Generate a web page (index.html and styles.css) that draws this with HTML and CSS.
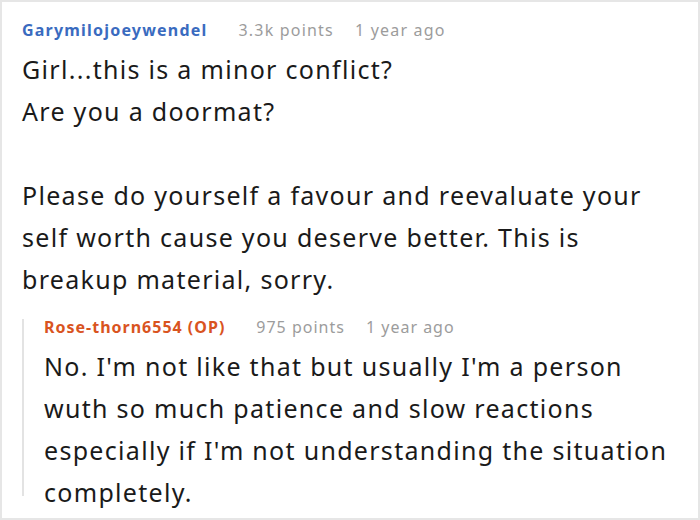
FILE: index.html
```html
<!DOCTYPE html>
<html>
<head>
<meta charset="utf-8">
<link rel="stylesheet" href="styles.css">
</head>
<body>
<div class="frame">
  <div class="comment">
    <div class="meta">
      <span class="author blue">Garymilojoeywendel</span>
      <span class="points">3.3k points</span>
      <span class="time">1 year ago</span>
    </div>
    <div class="text">Girl...this is a minor conflict?<br>Are you a doormat?<br><br>Please do yourself a favour and reevaluate your<br>self worth cause you deserve better. This is<br>breakup material, sorry.</div>
    <div class="reply">
      <div class="meta">
        <span class="author orange">Rose-thorn6554 (OP)</span>
        <span class="points">975 points</span>
        <span class="time">1 year ago</span>
      </div>
      <div class="text">No. I'm not like that but usually I'm a person<br>wuth so much patience and slow reactions<br>especially if I'm not understanding the situation<br>completely.</div>
    </div>
  </div>
</div>
</body>
</html>
```

FILE: styles.css
```css
html, body {
  margin: 0;
  padding: 0;
  background: #fff;
}
.frame {
  width: 700px;
  height: 520px;
  box-sizing: border-box;
  border: 2px solid #e6e6e6;
  overflow: hidden;
}
.comment {
  padding: 16px 0 0 20px;
}
.meta {
  display: flex;
  font-family: "Noto Sans", sans-serif;
  font-size: 16px;
  letter-spacing: 1.2px;
  line-height: 24px;
  color: #9c9c9c;
  white-space: nowrap;
}
.author {
  font-weight: 700;
  margin-right: 31px;
}
.points {
  margin-right: 21px;
}
.blue { color: #3a6bbf; }
.orange { color: #d9541f; }
.text {
  font-family: "Noto Sans", sans-serif;
  font-size: 25px;
  letter-spacing: 1.3px;
  line-height: 42px;
  color: #1a1a1a;
  margin-top: 6px;
  white-space: nowrap;
}
.reply {
  margin-top: 29px;
  height: 177px;
  border-left: 2px solid #e3e3e3;
  padding-left: 20px;
}
.reply .meta {
  letter-spacing: 1px;
  line-height: 16px;
  margin-top: -10px;
}
.reply .text {
  margin-top: 10px;
}
```
